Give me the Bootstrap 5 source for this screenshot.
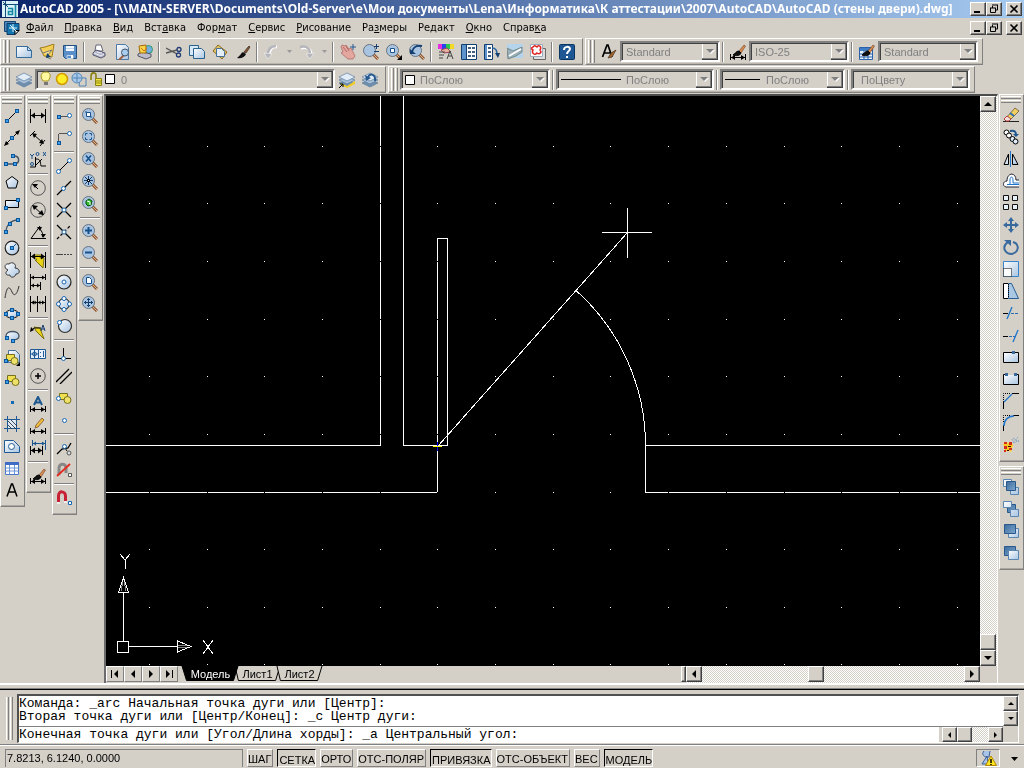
<!DOCTYPE html>
<html lang="ru">
<head>
<meta charset="utf-8">
<meta name="viewport" content="width=device-width, initial-scale=1">
<title>AutoCAD 2005</title>
<link rel="stylesheet" href="https://cdn.jsdelivr.net/npm/bootstrap@5.3.0/dist/css/bootstrap.min.css">
<style>
:root{--face:#d4d0c8;--shade:#808080;--dark:#404040;--ui:"DejaVu Sans Condensed","DejaVu Sans",sans-serif;--ms:"Liberation Sans",Arial,sans-serif}
body{background:var(--face);color:#000;font:11px/14px var(--ui);overflow:hidden}
button,select,input{font:inherit;color:inherit;border-radius:0}
button{background:none;border:0;padding:0}
svg{display:block;flex:none;fill:none;stroke:#000}
.titlebar{height:18px;padding:0 2px;background:linear-gradient(90deg,#0a246a,#a6caf0);color:#fff;font:bold 12px/16px "Noto Sans",sans-serif}
.titlebar span{padding-left:2px}
.winbtn{width:16px;height:14px;background:var(--face);border:1px solid;border-color:#fff var(--dark) var(--dark) #fff;box-shadow:inset -1px -1px var(--shade)}
.menubar{height:20px;padding:0 2px 0 4px}
.menubar a{color:#000;text-decoration:none;padding:0 5px 0 6px}
.menubar a u,.menubar a:hover u{text-decoration:underline}
.barrow{height:28px;gap:2px}
.hbar{height:27px;padding:0 4px 0 2px;border:1px solid;border-color:#fff var(--shade) var(--shade) #fff;box-shadow:inset 0 -1px #bab6ae}
.grip{width:7px;height:23px;margin-right:2px;background:linear-gradient(90deg,#fff 1px,var(--face) 1px 2px,var(--shade) 2px 3px,var(--face) 3px 4px,#fff 4px 5px,var(--face) 5px 6px,var(--shade) 6px)}
.hbar .tool{width:23px;height:22px}
.hbar .thin{width:12px}
.vsep{width:2px;height:20px;margin:0 2px;border-left:1px solid var(--shade);border-right:1px solid #fff}
.tool{display:flex;align-items:center;justify-content:center;width:22px;height:22px;flex:none}
.combo{position:relative;height:21px}
.combo svg{position:absolute;left:5px;top:2px;pointer-events:none}
.combo select{width:100%;height:21px;appearance:none;color:var(--shade);font:11px/14px var(--ms);padding:0 18px 0 4px;border:2px solid;border-color:var(--shade) #fff #fff var(--shade);box-shadow:inset 1px 1px var(--dark);background:var(--face) url("data:image/svg+xml,%3Csvg xmlns='http://www.w3.org/2000/svg' width='16' height='17'%3E%3Cpath d='M0 0h16v17H0z' fill='%23404040'/%3E%3Cpath d='M0 0h15v16H0z' fill='%23808080'/%3E%3Cpath d='M0 0h14v15H0z' fill='%23fff'/%3E%3Cpath d='M1 1h13v14H1z' fill='%23d4d0c8'/%3E%3Cpath d='M5 7h8l-4 4z' fill='%23fff'/%3E%3Cpath d='M4 6h8l-4 4z' fill='%23808080'/%3E%3C/svg%3E") no-repeat right 0 top 0}
.w-style{width:100px}.w-layer{width:300px}.w-color{width:150px}.w-line{width:158px}.w-weight{width:125px}.w-plot{width:119px}
.combo .p-sw{padding-left:18px}.combo .p-line{padding-left:68px}.combo .p-wt{padding-left:44px}.combo .p-layer{padding-left:84px}
.docks{width:104px;padding-top:1px}
.vbar{width:25px;padding:1px 1px 5px 0;border:1px solid;border-color:#fff var(--shade) var(--shade) #fff;box-shadow:inset 0 -1px #aaa69e}
.vgrip{width:20px;height:7px;margin-bottom:1px;background:linear-gradient(#fff 1px,var(--face) 1px 2px,var(--shade) 2px 3px,var(--face) 3px 4px,#fff 4px 5px,var(--face) 5px 6px,var(--shade) 6px)}
.hsep{width:20px;height:2px;margin:2px 0;border-top:1px solid var(--shade);border-bottom:1px solid #fff}
.mdi{border:solid;border-width:2px 1px 0 2px;border-color:#4c4c4c #fff #fff #6c6c6c}
.paper{background:#000}
.paper svg{shape-rendering:crispEdges;stroke:#fff}
.ucs{position:absolute;left:8px;bottom:9px}
.track{background:repeating-conic-gradient(#fff 0 25%,#d4d0c8 0 50%) 0 0/2px 2px}
.vscroll{width:17px}
.sb{width:16px;height:16px;flex:none;display:flex;align-items:center;justify-content:center;background:var(--face);border:1px solid;border-color:#fff var(--dark) var(--dark) #fff;box-shadow:inset -1px -1px var(--shade)}
.sb svg,.blackico{fill:#000;stroke:none}
.tabrow{height:17px}
.tabnav .sb{width:18px;border-color:#fff var(--shade) var(--shade) #fff;box-shadow:none}
.sheet{position:relative;height:16px;font-family:var(--ms);padding:0 2px 0 7px;min-width:42px}
.sheet svg{position:absolute;left:0;top:0;width:calc(100% + 4px);height:15px;fill:var(--face);z-index:-1;overflow:visible}
.sheet.current{color:#fff;z-index:2;min-width:52px}
.sheet.current svg{fill:#000}
.sheets{isolation:isolate}
.split{width:5px}
.hscroll{width:294px}
.hscroll .thumb{margin-left:36%;margin-right:auto}
.dockright{padding-left:1px}
.cmd{border-top:2px solid #fff;padding:3px 5px 1px 6px;position:relative}
.rule{height:2px;margin:0 -5px 4px -6px;border-top:1px solid var(--shade);border-bottom:1px solid #000}
.cmdgrip{width:7px;margin:3px 4px 3px 0;background:linear-gradient(90deg,#fff 1px,var(--face) 1px 2px,var(--shade) 2px 3px,var(--face) 3px 4px,#fff 4px 5px,var(--face) 5px 6px,var(--shade) 6px)}
.cmdbox{border:solid;border-width:2px 1px 1px 2px;border-color:#505050 #fff #fff #505050;font:13px/13px "Liberation Mono","Courier New",monospace}
.cmdbox .sb{width:15px;height:15px}
.log{height:30px;padding:1px 0 0 0;background:#fff;white-space:pre}
.cmdbox input{border:0;padding:0;height:15px;background:#fff;outline:0}
.cmdline{border-top:1px solid var(--shade);margin-right:15px;background:var(--face)}
.cmdscroll{width:64px;padding-left:3px}
.status{height:24px;padding:4px 5px 0;border-top:1px solid var(--shade);box-shadow:inset 0 1px #fff;font:11px/16px var(--ms)}
.coords{width:238px;height:18px;padding-left:1px;border:solid;border-width:1px 1px 0;border-color:var(--shade) var(--shade) #fff}
.mode{height:18px;padding:1px 1px 0 0;border:1px solid;border-color:#fff var(--shade) var(--shade) #fff;white-space:nowrap;text-align:center}
.mode.on{border-color:#000 #fff #fff #000;padding:2px 0 0 1px}
.tray{width:24px;height:18px;border:1px solid;border-color:var(--shade) #fff #fff var(--shade);margin-right:7px}
</style>
</head>
<body class="d-flex flex-column vh-100">
<svg width="0" height="0" class="position-absolute" aria-hidden="true"><defs>
<g id="n" stroke="none"><path d="M0 0h4v4H0z" fill="#0c5799"/><path d="M1 1h2v2H1z" fill="#3f9fec"/></g>
<circle id="o" cx="2.5" cy="2.5" r="2" fill="#fff" stroke="#1768b4"/>
<g id="mag"><path d="m10.500 10.500 4.500 4.500" stroke="#8b5a3c" stroke-width="3"/><path d="m11 11 4 4" stroke="#e6b07a"/><circle cx="6.500" cy="6.500" r="6" fill="#a9c4e0" stroke="#68737f"/></g>
<g id="dim"><path d="M.5 1v14M15.500 1v14M1 7.500h14"/><path d="m1 7.500 4-3v6zM15 7.500l-4-3v6z" fill="#000" stroke="none"/></g>
<g id="dimlow"><path d="M.5 10v6M15.500 10v6M1 13.500h14"/><path d="m1 13.500 4-2.500v5zM15 13.500l-4-2.500v5z" fill="#000" stroke="none"/></g>
<g id="brush"><path d="m9 7 5-6 1.500 1L11 9z" fill="#d98c50" stroke="#704020" stroke-width=".6"/><path d="M9 7c-3 0-4 3-6 4 3 1 7 1 8-2z" fill="#111"/></g>
<g id="layers" stroke="#5c7c9c" stroke-width=".7"><path d="m0 11 8-3 8 3-8 4z" fill="#6f8fae"/><path d="m0 8 8-3 8 3-8 4z" fill="#a9c2da"/><path d="m0 5 8-4 8 4-8 4z" fill="#e2edf8"/></g>
<g id="duo"><path d="M.5.5h8v6h-8z" fill="#f0df50" stroke="#77701a"/><circle cx="8.500" cy="7" r="3.500" fill="#eee16a" stroke="#77701a"/></g>
<linearGradient id="sheen" x2="1" y2="1"><stop stop-color="#fff"/><stop offset="1" stop-color="#a9c5e2"/></linearGradient>
<linearGradient id="deep" x2="1" y2="1"><stop stop-color="#3e6b9c"/><stop offset="1" stop-color="#7ca6ce"/></linearGradient>
<g id="min"><path d="M3 9h6" stroke-width="2"/></g>
<g id="rest"><path d="M5 2h6M5.500 3v2M10.500 2v5H9M3 5h6M3.500 5v4.500h5V5"/></g>
<g id="cls"><path d="m3.500 2.500 7 7m0-7-7 7" stroke-width="1.600"/></g>
</defs></svg>

<header class="titlebar d-flex align-items-center">
<svg width="16" height="16" viewBox="0 0 16 16"><path d="M0 0h16v16H0z" fill="#d8f2f6" stroke="none"/><path d="M1 3.500h15M3.500 0v16M1 1l5 5" stroke="#164b78"/><path d="M6 7.500h4.500v6h-4v-3h4M13.500 4v12" stroke="#1687a6" stroke-width="1.600"/></svg>
<span class="flex-grow-1 text-nowrap overflow-hidden">AutoCAD 2005 - [\\MAIN-SERVER\Documents\Old-Server\e\Мои документы\Lena\Информатика\К аттестации\2007\AutoCAD\AutoCAD (стены двери).dwg]</span>
<button class="winbtn" aria-label="Свернуть"><svg width="14" height="12"><use href="#min"/></svg></button>
<button class="winbtn" aria-label="Восстановить"><svg width="14" height="12"><use href="#rest"/></svg></button>
<button class="winbtn ms-1" aria-label="Закрыть"><svg width="14" height="12"><use href="#cls"/></svg></button>
</header>

<nav class="menubar d-flex align-items-center">
<svg width="16" height="16" viewBox="0 0 16 16"><path d="M.5 1.500h11v10H.5z" fill="#4c88bd" stroke="#174572"/><path d="M3 3.500h12v7l-4 4H3z" fill="#1474ad" stroke="#123d68"/><path d="M15 10.500h-4v4z" fill="#fff"/><path d="M5 8h8M9 4v8M6 5l6 6" stroke="#e1fbff"/></svg>
<a href="#"><u>Ф</u>айл</a><a href="#"><u>П</u>равка</a><a href="#"><u>В</u>ид</a><a href="#">Вст<u>а</u>вка</a><a href="#">Фор<u>м</u>ат</a><a href="#"><u>С</u>ервис</a><a href="#"><u>Р</u>исование</a><a href="#">Ра<u>з</u>меры</a><a href="#">Ре<u>д</u>акт</a><a href="#"><u>О</u>кно</a><a href="#">Справ<u>к</u>а</a>
<button class="winbtn ms-auto" aria-label="Свернуть чертеж"><svg width="14" height="12"><use href="#min"/></svg></button>
<button class="winbtn" aria-label="Восстановить чертеж"><svg width="14" height="12"><use href="#rest"/></svg></button>
<button class="winbtn ms-1" aria-label="Закрыть чертеж"><svg width="14" height="12"><use href="#cls"/></svg></button>
</nav>

<div class="barrow d-flex">
<div class="hbar d-flex align-items-center" role="toolbar" aria-label="Стандартная">
<span class="grip"></span>
<button class="tool" aria-label="Создать"><svg width="16" height="16"><path d="M.5 2.500h11l4 4v7H.5z" fill="url(#sheen)" stroke="#336b9c"/><path d="M11.500 2.500v4h4" stroke="#336b9c"/></svg></button>
<button class="tool" aria-label="Открыть"><svg width="16" height="16"><path d="m1 4 5-1 9-3-2 13-8-1z" fill="#f4cf55" stroke="#a47c18"/><path d="m1 4 3 5 9-3-6 7 5 2" fill="#fae896" stroke="#777"/><path d="m7 14 1-5 4 4z" fill="#16406e" stroke="none"/></svg></button>
<button class="tool" aria-label="Сохранить"><svg width="16" height="16"><path d="M1.500 1.500h13v13h-11l-2-2z" fill="#5b8fca" stroke="#23507f"/><path d="M4 2h8v5H4z" fill="#f4f8ff" stroke="none"/><path d="M4 4.500h8M5 11.500h6v3H5z" stroke="#bed4ea"/><path d="M9 11h2v3H9z" fill="#fff" stroke="none"/></svg></button>
<span class="vsep"></span>
<button class="tool" aria-label="Печать"><svg width="16" height="16"><path d="m4 7 1-6h5l2 6z" fill="#fff" stroke="#667"/><path d="m2 9 3-3 9 3v3l-4 2-8-3z" fill="#b3b5cc" stroke="#55566b"/><path d="m3 9 7 3 3-2M6 8l5 1" stroke="#eee"/></svg></button>
<button class="tool" aria-label="Предварительный просмотр"><svg width="16" height="16"><path d="M2.500.5h9l3 3v12h-12z" fill="url(#sheen)" stroke="#4d79a4"/><path d="m10 11-5 5" stroke="#a06040" stroke-width="2"/><circle cx="11" cy="8.500" r="3.500" fill="#a9cdee" stroke="#456"/></svg></button>
<button class="tool" aria-label="Публикация"><svg width="16" height="16"><circle cx="11.500" cy="5.500" r="4" fill="#6fb0e0" stroke="#396"/><path d="m1 10 4-2 9 2v3l-5 2-8-3z" fill="#bbc" stroke="#556"/><path d="m2 2 7-1v8H3z" fill="#f5d448" stroke="#a56c0a"/><path d="m4 4 3 3 3-3" stroke="#d07010"/></svg></button>
<span class="vsep"></span>
<button class="tool" aria-label="Вырезать"><svg width="16" height="16"><path d="m0 4 11 6M0 9l11-3" stroke="#555" stroke-width="1.300"/><circle cx="13" cy="5.500" r="2" stroke="#203a74" stroke-width="1.300"/><circle cx="12.500" cy="11" r="2" stroke="#203a74" stroke-width="1.300"/></svg></button>
<button class="tool" aria-label="Копировать"><svg width="16" height="16"><path d="M.5 1.500h9v10h-9z" fill="#d8e8f6" stroke="#29618f"/><path d="M4.500 4.500h8l3 3v7h-11z" fill="url(#sheen)" stroke="#29618f"/></svg></button>
<button class="tool" aria-label="Вставить"><svg width="16" height="16"><path d="m1 7 5-6 9 7-5 7z" fill="#e2c364" stroke="#8b6a1c"/><path d="M4.500 4.500h5l3 3v5h-8z" fill="#e4eef8" stroke="#456f98"/></svg></button>
<button class="tool" aria-label="Копирование свойств"><svg width="16" height="16"><path d="m9 8 5-6 1 1-4 6z" fill="#8a5434" stroke="#543"/><path d="M8 8c-2 1-3 4-6 6 4 1 8-1 9-4z" fill="#111" stroke="none"/></svg></button>
<span class="vsep"></span>
<button class="tool" aria-label="Отменить" disabled><svg width="16" height="16"><path d="M13 3C8 2 5 6 5 11" stroke="#fff" stroke-width="3"/><path d="M12 2C6 2 4 6 4 11" stroke="#b5b5bb" stroke-width="2.500"/><path d="m0 9 8 1-4 5z" fill="#b5b5bb" stroke="#fff" stroke-width=".5"/></svg></button>
<button class="tool thin" aria-label="Список отмены" disabled><svg width="5" height="4"><path d="M0 0h5L2.500 3z" fill="#999" stroke="none"/></svg></button>
<button class="tool" aria-label="Повторить" disabled><svg width="16" height="16"><path d="M2 4c7-2 10 2 10 7" stroke="#fff" stroke-width="3"/><path d="M1 3c7-2 10 2 10 7" stroke="#b5b5bb" stroke-width="2.500"/><path d="m7 10 8-1-4 6z" fill="#b5b5bb" stroke="#fff" stroke-width=".5"/></svg></button>
<button class="tool thin" aria-label="Список повтора" disabled><svg width="5" height="4"><path d="M0 0h5L2.500 3z" fill="#999" stroke="none"/></svg></button>
<span class="vsep"></span>
<button class="tool" aria-label="Панорамирование"><svg width="16" height="16"><path d="m1 3 2 5-2 1 7 6h5l2-3-4-8-2 1-3-4-1 1-3-1z" fill="#e3a7a0" stroke="#b06a68" stroke-width=".8"/><path d="m3 3 4 5M6 2l3 5" stroke="#b06a68"/><path d="M13 0v6M10 3h6" stroke="#245a92"/></svg></button>
<button class="tool" aria-label="Зумирование"><svg width="16" height="16"><use href="#mag"/><path d="M13.500 0v5M11 2.500h5M11 7.500h5" stroke="#123e70"/></svg></button>
<button class="tool" aria-label="Зумирование рамкой"><svg width="16" height="16"><use href="#mag"/><path d="M4.500 4.500h4v4h-4z" fill="#fff" stroke="#17518c"/><path d="M16 11v5h-5z" fill="#000" stroke="none"/></svg></button>
<button class="tool" aria-label="Зумирование предыдущее"><svg width="16" height="16"><use href="#mag"/><path d="M3 8c1-5 5-7 10-6" stroke="#123e70" stroke-width="2"/><path d="M1 5v5h6z" fill="#123e70" stroke="none"/></svg></button>
<span class="vsep"></span>
<button class="tool" aria-label="Свойства"><svg width="16" height="16"><path d="M0 0h4v5H0z" fill="#e22ee0" stroke="none"/><path d="M4 0h4v5H4z" fill="#2943e8" stroke="none"/><path d="M8 0h4v5H8z" fill="#2cc84c" stroke="none"/><path d="M12 0h4v5h-4z" fill="#f2d928" stroke="none"/><path d="m3 6 6-2 4 4-7 1z" fill="#e8b0a0" stroke="#945"/><path d="M1 8h6M1 11h5M1 14h4" stroke="#444"/><path d="m9 15 3-8 3 8m-5-3h4" stroke="#444"/></svg></button>
<button class="tool" aria-label="Центр управления"><svg width="16" height="16"><path d="M.5.5h15v15H.5z" fill="#fff" stroke="#123e70"/><path d="M1 1h4v14H1z" fill="#5e93cc" stroke="none"/><path d="M5.500 1v14" stroke="#123e70"/><path d="M7 4h3m1 0h3M7 8h3m1 0h3M7 12h3m1 0h3" stroke="#47617f" stroke-width="2"/></svg></button>
<button class="tool" aria-label="Инструментальные палитры"><svg width="16" height="16"><path d="M.5.5h8v15h-8z" fill="#fff" stroke="#123e70"/><path d="M1 1h2v14H1z" fill="#5e93cc" stroke="none"/><path d="M4 4h3M4 8h3M4 12h3" stroke-width="2" stroke="#47617f"/><path d="M8 4c4 0 5 2 5 6" stroke="#2865a4" stroke-width="1.500"/><path d="M11 9h5l-2 5z" fill="#123e70" stroke="none"/></svg></button>
<button class="tool" aria-label="Диспетчер подшивок"><svg width="16" height="16"><path d="M0 0h16v14H0z" fill="#b4d4ee" stroke="none"/><path d="m0 4 6 3 9-4v5l-6 4-8 3z" fill="#9aaeb8" stroke="#788"/><path d="m2 12 12-7" stroke="#fff" stroke-width="2"/></svg></button>
<button class="tool" aria-label="Диспетчер пометок"><svg width="16" height="16"><path d="M3.500 4.500h12v11h-12z" fill="#ddd" stroke="#666"/><path d="M.5.5h12v12H.5z" fill="#fff" stroke="#9aabbb"/><path d="M3 3c2-3 3 0 4 0 2-3 5 0 3 3 2 2 0 5-3 3-2 3-6 0-4-3-2-1-2-2 0-3z" stroke="#e02525" stroke-width="1.500"/></svg></button>
<span class="vsep"></span>
<button class="tool" aria-label="Справка"><svg width="16" height="16"><rect x=".5" y=".5" width="15" height="15" rx="1" fill="#1e5793" stroke="#0b3563"/><path d="M5 6c0-4 6-4 6-1 0 2-3 2-3 5" stroke="#fff" stroke-width="2"/><path d="M7 12h2v2H7z" fill="#fff" stroke="none"/></svg></button>
</div>
<div class="hbar d-flex align-items-center" role="toolbar" aria-label="Стили">
<span class="grip"></span>
<button class="tool" aria-label="Текстовые стили"><svg width="16" height="16"><path d="M1.500 13 6 1h1l4 12M3 9h6" stroke-width="1.700"/><path d="m7 14 3-5 5-3-4 7z" fill="#a4642e" stroke="#432" stroke-width=".7"/></svg></button>
<div class="combo w-style"><select aria-label="Текстовый стиль"><option>Standard</option></select></div><span class="vsep"></span>
<button class="tool" aria-label="Размерные стили"><svg width="16" height="16"><use href="#dimlow"/><use href="#brush"/></svg></button>
<div class="combo w-style"><select aria-label="Размерный стиль"><option>ISO-25</option></select></div><span class="vsep"></span>
<button class="tool" aria-label="Табличные стили"><svg width="16" height="16"><path d="M.5 3.500h13v12H.5z" fill="#eaf2fb" stroke="#2b63aa"/><path d="M1 4h12v3H1z" fill="#3f7dc4" stroke="none"/><path d="M1 10h12M1 13h12M5 7v8M9 7v8" stroke="#2b63aa"/><use href="#brush"/></svg></button>
<div class="combo w-style"><select aria-label="Табличный стиль"><option>Standard</option></select></div>
</div>
</div>

<div class="barrow d-flex">
<div class="hbar d-flex align-items-center" role="toolbar" aria-label="Слои">
<span class="grip"></span>
<button class="tool" aria-label="Диспетчер слоев"><svg width="16" height="16"><use href="#layers"/></svg></button>
<div class="combo w-layer"><select class="p-layer" aria-label="Слой"><option>0</option></select>
<svg width="78" height="17"><path d="M3 10C-1 4 2 1 6 1s6 4 2 9z" fill="#fff9a0" stroke="#a9951d"/><path d="M4 11h4v3H4z" fill="#777" stroke="none"/><circle cx="22" cy="8" r="5.500" fill="#ffed28" stroke="#d19900" stroke-width="1.500"/><path d="M40 7h6v8h-7z" fill="#d4d0c8" stroke="#5285b4"/><circle cx="37" cy="7" r="5" fill="#a7c8e8" stroke="#5285b4"/><path d="M37 3v8M33 7h8" stroke="#5285b4"/><path d="M51 9V5c0-4 5-4 5-1v4" stroke="#8b8214" stroke-width="1.600"/><path d="M55.500 7.500h6v7h-6z" fill="#f1e840" stroke="#8b8214"/><path d="M56 10h6M56 12h6" stroke="#8b8214"/><path d="M65.500 3.500h9v9h-9z" fill="#fff"/></svg></div>
<button class="tool" aria-label="Слой объекта"><svg width="16" height="16"><use href="#layers"/><path d="m2 11 6 3 8-5v3l-8 4-6-3z" fill="#f2cc28" stroke="none"/><path d="m0 16 4-4m-3 0h3v3"/></svg></button>
<button class="tool" aria-label="Предыдущий слой"><svg width="16" height="16"><use href="#layers"/><path d="M13 9c1-7-5-8-7-4" stroke="#29588c" stroke-width="2"/><path d="m3 3 1 6 5-3z" fill="#29588c" stroke="none"/></svg></button>
</div>
<div class="hbar d-flex align-items-center" role="toolbar" aria-label="Свойства объектов">
<span class="grip"></span>
<div class="combo w-color"><select class="p-sw" aria-label="Цвет"><option>ПоСлою</option></select><svg width="12" height="16"><path d="M.5 4.500h9v9h-9z" fill="#fff"/></svg></div><span class="vsep"></span>
<div class="combo w-line"><select class="p-line" aria-label="Тип линии"><option>ПоСлою</option></select><svg width="60" height="16"><path d="M0 8.500h60"/></svg></div><span class="vsep"></span>
<div class="combo w-weight"><select class="p-wt" aria-label="Вес линии"><option>ПоСлою</option></select><svg width="35" height="16"><path d="M0 8.500h35"/></svg></div><span class="vsep"></span>
<div class="combo w-plot"><select class="p-plot ps-2" aria-label="Стиль печати"><option>ПоЦвету</option></select></div>
</div>
</div>

<main class="d-flex flex-grow-1" style="min-height:0">
<aside class="docks d-flex align-items-start flex-shrink-0">
<div class="vbar me-auto d-flex flex-column align-items-center" role="toolbar" aria-label="Рисование">
<span class="vgrip"></span>
<button class="tool" aria-label="Отрезок"><svg width="16" height="16"><path d="M3 13 13 3"/><use href="#n" x="1" y="11"/><use href="#n" x="11" y="1"/></svg></button>
<button class="tool" aria-label="Прямая"><svg width="16" height="16"><path d="M2 14 14 2"/><path d="m0 16 2-5 3 3zM16 0l-2 5-3-3z" fill="#000" stroke="none"/><use href="#n" x="6" y="6"/></svg></button>
<button class="tool" aria-label="Полилиния"><svg width="16" height="16"><path d="M2 12h9c5-1 5-8-1-8H8" stroke="#456" stroke-width="1.500"/><use href="#n" x="0" y="10"/><use href="#n" x="9" y="10"/><use href="#n" x="7" y="2"/></svg></button>
<button class="tool" aria-label="Многоугольник"><svg width="16" height="16"><path d="m8 2.500 6 4.500-2 7H4L2 7z" fill="url(#sheen)"/></svg></button>
<button class="tool" aria-label="Прямоугольник"><svg width="16" height="16"><path d="M1.500 4.500h13v7h-13z" fill="url(#sheen)"/><use href="#n" x="0" y="10"/><use href="#n" x="12" y="2"/></svg></button>
<button class="tool" aria-label="Дуга"><svg width="16" height="16"><path d="M2 14C2 7 7 2 14 2" stroke="#456" stroke-width="1.300"/><use href="#n" x="0" y="12"/><use href="#n" x="4" y="4"/><use href="#n" x="12" y="0"/></svg></button>
<button class="tool" aria-label="Круг"><svg width="16" height="16"><circle cx="8" cy="8" r="6.800" fill="url(#sheen)" stroke="#222" stroke-width="1.200"/><path d="m8 8 4-4" stroke="#17518c"/><use href="#n" x="6" y="6"/></svg></button>
<button class="tool" aria-label="Облако"><svg width="16" height="16"><path d="M4 8C-1 6 1 1 5 2c3-3 8 0 6 4 5 0 6 6 1 6-1 4-6 4-6 1-5 1-5-3-2-5z" fill="url(#sheen)" stroke="#333"/></svg></button>
<button class="tool" aria-label="Сплайн"><svg width="16" height="16"><path d="M1 14C3 0 6 3 8 8s5 3 7-6" stroke="#333"/></svg></button>
<button class="tool" aria-label="Эллипс"><svg width="16" height="16"><ellipse cx="8" cy="8" rx="6.500" ry="4" fill="url(#sheen)"/><use href="#n" x="0" y="6"/><use href="#n" x="12" y="6"/><use href="#n" x="6" y="2"/><use href="#n" x="6" y="10"/></svg></button>
<button class="tool" aria-label="Эллиптическая дуга"><svg width="16" height="16"><path d="M2 8c0-6 13-6 13 0 0 3-3 4-7 4" fill="url(#sheen)" stroke="#456" stroke-width="1.300"/><use href="#n" x="1" y="8"/><use href="#n" x="7" y="11"/></svg></button>
<button class="tool" aria-label="Вставить блок"><svg width="16" height="16"><path d="M4.500.5h7l4 4v8h-11z" fill="url(#sheen)" stroke="#456f98"/><use href="#duo" x="2" y="4"/><use href="#n" x="0" y="9"/><path d="M16 12v4h-4z" fill="#000" stroke="none"/></svg></button>
<button class="tool" aria-label="Создать блок"><svg width="16" height="16"><use href="#duo" x="3" y="3"/><use href="#n" x="1" y="8"/></svg></button>
<button class="tool" aria-label="Точка"><svg width="16" height="16"><path d="M7 7h3v3H7z" fill="#1468b4" stroke="none"/></svg></button>
<button class="tool" aria-label="Штриховка"><svg width="16" height="16"><path d="M3 3h10v10H3z" fill="#dce9f6" stroke="none"/><path d="M3.500 0v16M12.500 0v16M0 3.500h16M0 12.500h16" stroke="#205a94"/><path d="m4 9 4 4M4 5l8 8M7 4l6 6" stroke="#222" stroke-width=".8"/></svg></button>
<button class="tool" aria-label="Область"><svg width="16" height="16"><path d="M.5 2.500h9l6 6v6H.5z" fill="url(#sheen)" stroke="#205a94"/><circle cx="7.500" cy="8.500" r="3" fill="#fff" stroke="#205a94"/></svg></button>
<button class="tool" aria-label="Таблица"><svg width="16" height="16"><path d="M1.500 2.500h13v12h-13z" fill="#fff" stroke="#4b7ac8"/><path d="M1 2h14v3H1z" fill="#3f6cc4" stroke="none"/><path d="M2 8h12M2 11h12M5.500 5v9M10.500 5v9" stroke="#6c94d8"/></svg></button>
<button class="tool" aria-label="Многострочный текст"><svg width="16" height="16"><path d="M3 14.500 7.500 2h1L13 14.500M5 10h6" stroke-width="1.500"/></svg></button>
</div>
<div class="vbar me-auto d-flex flex-column align-items-center" role="toolbar" aria-label="Размеры">
<span class="vgrip"></span>
<button class="tool" aria-label="Линейный размер"><svg width="16" height="16"><use href="#dim"/></svg></button>
<button class="tool" aria-label="Параллельный размер"><svg width="16" height="16"><path d="M5 1 0 6m15 4-5 6M3 4l10 9"/><path d="m2 3 5 1-3 4zM14 14l-5-1 3-4z" fill="#000" stroke="none"/></svg></button>
<button class="tool" aria-label="Ординатный размер"><svg width="16" height="16"><path d="M5.500 5v10H0M6 7c5 0 4 3 5 7h5M5 14l7-7"/><path d="m0 2 2 2 2-2M2 4v3M13 0l3 4m0-4-3 4" stroke="#17518c"/><circle cx="7.500" cy="2" r="1.500" stroke="#17518c"/><circle cx="2" cy="12" r="1.500" stroke="#17518c"/></svg></button>
<span class="hsep"></span>
<button class="tool" aria-label="Радиус"><svg width="16" height="16"><circle cx="8" cy="8" r="7.300" stroke="#555"/><path d="m4 5 4 4"/><path d="m2 4 6 0-3 4z" fill="#000" stroke="none"/></svg></button>
<button class="tool" aria-label="Диаметр"><svg width="16" height="16"><circle cx="8" cy="8" r="7.300" stroke="#555"/><path d="m3 4 10 9"/><path d="m2 3 6 1-4 4zM14 13l-6-1 4-4z" fill="#000" stroke="none"/></svg></button>
<button class="tool" aria-label="Угловой размер"><svg width="16" height="16"><path d="M16 14.500H1L10 2M8 4c4 2 5 6 5 9"/><path d="m7 3 5 0-2 4zM11 10h5l-3 4z" fill="#000" stroke="none"/></svg></button>
<span class="hsep"></span>
<button class="tool" aria-label="Быстрый размер"><svg width="16" height="16"><path d="M3 3h9l-2 3h4l-1 10-8-8h2z" fill="#e8d21a" stroke="#7d700c"/><path d="M.5 0v16M15.500 0v16M1 4.500h14"/><path d="m1 4.500 4-3v6zM15 4.500l-4-3v6z" fill="#000" stroke="none"/></svg></button>
<button class="tool" aria-label="Базовый размер"><svg width="16" height="16"><path d="M.5 0v16M15.500 0v6M10.500 8v8M1 3.500h14M1 11.500h9"/><path d="m1 3.500 3-2v4zM15 3.500l-3-2v4zM1 11.500l3-2v4zM10 11.500l-3-2v4z" fill="#000" stroke="none"/></svg></button>
<button class="tool" aria-label="Размерная цепь"><svg width="16" height="16"><path d="M.5 0v16M7.500 0v16M15.500 0v16M1 6.500h14"/><path d="m1 6.500 3-2v4zM15 6.500l-3-2v4zM8 6.500l2.500-2v4zM7 6.500l-2.500-2v4z" fill="#000" stroke="none"/></svg></button>
<span class="hsep"></span>
<button class="tool" aria-label="Быстрая выноска"><svg width="16" height="16"><path d="m4 3 6 1 4 11-8-8z" fill="#e8d21a" stroke="#7d700c"/><path d="m1 7 3-3h7" stroke="#111"/><path d="m11 7 2-6 2 6m-3-2h3" stroke="#173e70"/><path d="m0 8 1-5 3 3z" fill="#000" stroke="none"/></svg></button>
<button class="tool" aria-label="Допуск"><svg width="16" height="16"><path d="M.5 3.500h15v9H.5zM8.500 3v10" fill="#e8f1fb" stroke="#205a94"/><circle cx="4.500" cy="8" r="2" stroke="#205a94"/><path d="M4.500 4v8M1 8h7M10.500 6v1M10.500 10v1M13.500 5v6" stroke="#205a94"/></svg></button>
<button class="tool" aria-label="Маркер центра"><svg width="16" height="16"><circle cx="8" cy="8" r="7.300" stroke="#555"/><path d="M8 5v6M5 8h6" stroke-width="1.500"/></svg></button>
<span class="hsep"></span>
<button class="tool" aria-label="Редактировать размер"><svg width="16" height="16"><path d="m4 9 4-8 4 8M5 6.500h6" stroke="#1b568e" stroke-width="2"/><use href="#dimlow"/></svg></button>
<button class="tool" aria-label="Редактировать текст размера"><svg width="16" height="16"><use href="#dimlow"/><path d="m5 10 1-3 6-7 2 2-6 7z" fill="#f0bd3c" stroke="#704020" stroke-width=".7"/></svg></button>
<button class="tool" aria-label="Обновить размер"><svg width="16" height="16"><path d="M2.500 0v6M15.500 0v10M3 3.500h12" stroke="#1b568e"/><path d="m3 3.500 3-2v4zM15 3.500l-3-2v4z" fill="#1b568e" stroke="none"/><path d="M.5 6v9M12.500 6v9M1 10.500h11"/><path d="m1 10.500 4-3v6zM12 10.500l-4-3v6z" fill="#000" stroke="none"/></svg></button>
<span class="hsep"></span>
<button class="tool" aria-label="Стили размеров"><svg width="16" height="16"><use href="#dimlow"/><use href="#brush"/></svg></button>
</div>
<div class="vbar me-auto d-flex flex-column align-items-center" role="toolbar" aria-label="Объектная привязка">
<span class="vgrip"></span>
<button class="tool" aria-label="Точка отслеживания"><svg width="16" height="16"><path d="M3 8.500h9" stroke="#555"/><use href="#n" x="1" y="7"/><use href="#o" x="11" y="5"/></svg></button>
<button class="tool" aria-label="Смещение"><svg width="16" height="16"><path d="M3 3.500h9M2.500 4v8" stroke="#555" stroke-dasharray="9 1 2 1 2"/><use href="#n" x="1" y="11"/><use href="#o" x="11" y="1"/></svg></button>
<span class="hsep"></span>
<button class="tool" aria-label="Конечная точка"><svg width="16" height="16"><path d="M3 13 13 3"/><use href="#o" x="0" y="11"/><use href="#o" x="11" y="0"/></svg></button>
<button class="tool" aria-label="Середина"><svg width="16" height="16"><path d="M1 15 15 1" stroke-width="1.300"/><use href="#o" x="5" y="6"/></svg></button>
<button class="tool" aria-label="Пересечение"><svg width="16" height="16"><path d="M1 15 15 1M1 1l14 14" stroke-width="1.300"/><use href="#o" x="5.500" y="5.500"/></svg></button>
<button class="tool" aria-label="Кажущееся пересечение"><svg width="16" height="16"><path d="m1 1 14 14" stroke-width="1.300"/><path d="M1 15 15 1" stroke-width="1.300" stroke-dasharray="3 2"/><use href="#o" x="5.500" y="5.500"/></svg></button>
<button class="tool" aria-label="Продолжение"><svg width="16" height="16"><path d="M0 8.500h7m1 0h2m1 0h2m1 0h2" stroke="#444"/></svg></button>
<span class="hsep"></span>
<button class="tool" aria-label="Центр"><svg width="16" height="16"><circle cx="8" cy="8" r="7" fill="url(#sheen)" stroke="#222" stroke-width="1.200"/><use href="#o" x="5.500" y="5.500"/></svg></button>
<button class="tool" aria-label="Квадрант"><svg width="16" height="16"><circle cx="8" cy="8" r="5.500" fill="url(#sheen)"/><use href="#o" x="5.500" y="0"/><use href="#o" x="5.500" y="11"/><use href="#o" x="0" y="5.500"/><use href="#o" x="11" y="5.500"/></svg></button>
<button class="tool" aria-label="Касательная"><svg width="16" height="16"><circle cx="9" cy="8" r="6.500" fill="url(#sheen)" stroke="#333" stroke-width="1.200"/><use href="#o" x="1" y="2"/></svg></button>
<span class="hsep"></span>
<button class="tool" aria-label="Нормаль"><svg width="16" height="16"><path d="M7.500 2v10M1 12.500h14"/><use href="#o" x="5" y="10"/></svg></button>
<button class="tool" aria-label="Параллельно"><svg width="16" height="16"><path d="M0 14 13 1M4 16 16 4" stroke-width="1.300"/></svg></button>
<button class="tool" aria-label="Точка вставки"><svg width="16" height="16"><use href="#duo" x="3" y="3"/><use href="#o" x="0" y="6"/></svg></button>
<button class="tool" aria-label="Узел"><svg width="16" height="16"><use href="#o" x="6" y="6"/></svg></button>
<span class="hsep"></span>
<button class="tool" aria-label="Ближайшая"><svg width="16" height="16"><path d="m1 14 5-5 6-1 3-5" stroke-width="1.300"/><path d="m9 8 2 3"/><use href="#o" x="6" y="4"/><circle cx="13" cy="13" r="2" stroke="#555" fill="#ddd"/></svg></button>
<button class="tool" aria-label="Отменить привязку"><svg width="16" height="16"><path d="M3 13V6c0-5 7-5 7 0v5" stroke="#888" stroke-width="3"/><path d="M1 14 14 2" stroke="#e52b20" stroke-width="1.800"/><path d="M12.500 11.500h3v3h-3z" fill="#fff" stroke="#555"/></svg></button>
<span class="hsep"></span>
<button class="tool" aria-label="Режимы привязки"><svg width="16" height="16"><path d="M2.500 14V6c0-6 7-5 7 0v7" stroke="#c72136" stroke-width="3"/><path d="M1 13h3M8 12h3" stroke="#eee" stroke-width="2"/><path d="M12.500 11.500h3v3h-3z" fill="#fff" stroke="#1768b4"/></svg></button>
</div>
<div class="vbar me-auto d-flex flex-column align-items-center" role="toolbar" aria-label="Зумирование">
<span class="vgrip"></span>
<button class="tool" aria-label="Рамка"><svg width="16" height="16"><use href="#mag"/><path d="M4.500 4.500h4v4h-4zM3 4h2M8 9h2" fill="#fff" stroke="#17518c"/></svg></button>
<button class="tool" aria-label="Динамика"><svg width="16" height="16"><use href="#mag"/><path d="M3.500 5.500v-2h2M7.500 3.500h2v2M3.500 7.500v2h2M9.500 7.500v2h-2" stroke="#17518c"/></svg></button>
<button class="tool" aria-label="Масштаб"><svg width="16" height="16"><use href="#mag"/><path d="m4 3.500 5 6m0-6-5 6" stroke="#17518c" stroke-width="1.600"/></svg></button>
<button class="tool" aria-label="По центру"><svg width="16" height="16"><use href="#mag"/><path d="m3 3 7 7m0-7-7 7M6.500 2v9M2 6.500h9" stroke="#123e70"/><path d="M5.500 5.500h2v2h-2z" fill="#fff"/></svg></button>
<button class="tool" aria-label="Объект"><svg width="16" height="16"><use href="#mag"/><path d="m4 5 3-2 3 2-1 4-3 1-2-2z" fill="#31bd30" stroke="#064c0c"/><path d="m5 5 3 1v3" stroke="#fff"/></svg></button>
<span class="hsep"></span>
<button class="tool" aria-label="Увеличить"><svg width="16" height="16"><use href="#mag"/><path d="M6.500 3v7M3 6.500h7" stroke="#17518c" stroke-width="2"/></svg></button>
<button class="tool" aria-label="Уменьшить"><svg width="16" height="16"><use href="#mag"/><path d="M3 6.500h7" stroke="#17518c" stroke-width="2"/></svg></button>
<span class="hsep"></span>
<button class="tool" aria-label="Все"><svg width="16" height="16"><use href="#mag"/><path d="M4.500 3.500h3l2 2v4h-5z" fill="#fff" stroke="#17518c"/></svg></button>
<button class="tool" aria-label="Границы"><svg width="16" height="16"><use href="#mag"/><path d="M6.500 2v9M2 6.500h9M5 3.500h3M5 9.500h3M3.500 5v3M9.500 5v3" stroke="#123e70"/></svg></button>
</div>
</aside>

<section class="mdi flex-grow-1 d-flex flex-column" style="min-width:0">
<div class="d-flex flex-grow-1" style="min-height:0">
<div class="paper flex-grow-1 position-relative overflow-hidden" style="min-width:0">
<svg class="position-absolute" width="100%" height="100%" role="img" aria-label="Чертеж стены и двери">
<path d="M0 349.500h274.500V-10M297.500-10v359.500h44V142.500h-10v254H0M539.500 396.500H4000M539.500 396.500v-47M539.500 349.500H4000M332 350 521.500 136.500M539.500 350A208 208 0 0 0 470 194.500M496 136.500h50M521.500 112v50"/>
<path d="M331.500 346v9" stroke="#00f"/><path d="M327 350.500h9" stroke="#ff0"/>
<path style="mix-blend-mode:difference" stroke-dasharray="1 57 1 56 1 57 1 57 1 56 1 57 1 57 1 56 1 57 1 57" d="M43 50.500h4000M43 107.500h4000M43 165.500h4000M43 223.500h4000M43 280.500h4000M43 338.500h4000M43 396.500h4000M43 453.500h4000M43 511.500h4000M43 568.500h4000M43 626.500h4000M43 684.500h4000M43 742.500h4000M43 799.500h4000M43 857.500h4000M43 915.500h4000"/>
</svg>
<svg class="ucs" width="104" height="116" aria-hidden="true"><path d="M7 50l2-10M12 50l-2-10M64 104l11 1M64 107l11-1" stroke="#888"/><path d="M3.500 100.500h11v11h-11zM9.500 100V52M15 105.500h48M4.500 51.500h10L9.500 37zM63.500 100v11L77 105.500zM6 13l5 6 5-6M11.500 19v9M99 99l-10 14M89 99l10 14"/></svg>
</div>
<div class="vscroll track d-flex flex-column align-items-start">
<button class="sb" aria-label="Вверх"><svg width="8" height="4"><path d="M4 0 8 4H0z"/></svg></button>
<span class="sb mt-auto"></span>
<button class="sb" aria-label="Вниз"><svg width="8" height="4"><path d="M0 0h8L4 4z"/></svg></button>
</div>
</div>
<div class="tabrow d-flex">
<div class="tabnav d-flex">
<button class="sb" aria-label="Первый лист"><svg width="8" height="8"><path d="M0 0h1v8H0zM7 0v8L3 4z"/></svg></button>
<button class="sb" aria-label="Предыдущий лист"><svg width="8" height="8"><path d="M6 0v8L2 4z"/></svg></button>
<button class="sb" aria-label="Следующий лист"><svg width="8" height="8"><path d="M2 0v8l4-4z"/></svg></button>
<button class="sb" aria-label="Последний лист"><svg width="8" height="8"><path d="M7 0h1v8H7zM1 0v8l4-4z"/></svg></button>
</div>
<div class="sheets d-flex ms-1" role="tablist">
<button class="sheet current" role="tab" aria-selected="true"><svg viewBox="0 0 56 15" preserveAspectRatio="none"><path d="M0 0h56l-4.500 14.500h-47z"/></svg>Модель</button>
<button class="sheet" role="tab"><svg viewBox="0 0 47 15" preserveAspectRatio="none"><path d="M0 0h47l-4.500 14.500h-38z" stroke="none"/><path d="m47 0-4.500 14.500h-38L1 0"/></svg>Лист1</button>
<button class="sheet" role="tab"><svg viewBox="0 0 47 15" preserveAspectRatio="none"><path d="M0 0h47l-4.500 14.500h-38z" stroke="none"/><path d="m47 0-4.500 14.500h-38L1 0"/></svg>Лист2</button>
</div>
<span class="sb split ms-auto"></span>
<div class="hscroll track d-flex">
<button class="sb" aria-label="Влево"><svg width="4" height="8"><path d="M4 0v8L0 4z"/></svg></button>
<span class="sb thumb"></span>
<button class="sb" aria-label="Вправо"><svg width="4" height="8"><path d="M0 0v8l4-4z"/></svg></button>
</div>
<span class="vscroll"></span>
</div>
</section>

<aside class="dockright flex-shrink-0">
<div class="vbar d-flex flex-column align-items-center" role="toolbar" aria-label="Редактирование">
<span class="vgrip"></span>
<button class="tool" aria-label="Стереть"><svg width="16" height="16"><path d="M0 14.500h16" stroke="#222"/><path d="m3 11 9-10 4 3-8 8-3 1z" fill="#f2cf63" stroke="#6b5632" stroke-width=".8"/><path d="m1 12 3-3 4 3-2 2H3z" fill="#f4e0dc" stroke="#b43c3c"/><path d="m7 6 4 3" stroke="#3370a8" stroke-width="2"/></svg></button>
<button class="tool" aria-label="Копировать объект"><svg width="16" height="16"><circle cx="3.500" cy="3.500" r="2.500" fill="#fff"/><circle cx="6" cy="6.500" r="2.500" fill="#fff"/><circle cx="9.500" cy="10" r="2.500" fill="#dce9f6"/><circle cx="12.500" cy="12.500" r="2.500" fill="#dce9f6"/><path d="M7 2c5-1 6 1 6 4" stroke="#1b568e" stroke-width="2"/><path d="M10 5h6l-3 3z" fill="#1b568e" stroke="none"/></svg></button>
<button class="tool" aria-label="Зеркало"><svg width="16" height="16"><path d="M5.500 3v10.500H1zM9.500 3v10.500H15z" fill="url(#sheen)"/><path d="M7.500 0v16" stroke="#1e74c8"/></svg></button>
<button class="tool" aria-label="Подобие"><svg width="16" height="16"><path d="M16 14H3c-4-1-3-6 1-6 0-9 9-9 9-1h3" fill="#fff" stroke="#223"/><path d="M16 11.500H4M7 11V7c0-4 3-4 3 0v3h6" stroke="#1e74c8"/></svg></button>
<button class="tool" aria-label="Массив"><svg width="16" height="16"><path d="M.5.5h5v5h-5zM9.500.5h5v5h-5zM.5 9.500h5v5h-5zM9.500 9.500h5v5h-5z" fill="#e8f0fa" stroke="#111"/></svg></button>
<button class="tool" aria-label="Переместить"><svg width="16" height="16"><path d="M8 2v12M2 8h12" stroke="#386a9e" stroke-width="2"/><path d="m8 0 3 4H5zM8 16l3-4H5zM0 8l4-3v6zM16 8l-4-3v6z" fill="#386a9e" stroke="none"/></svg></button>
<button class="tool" aria-label="Повернуть"><svg width="16" height="16"><path d="M5 3c-7 5-3 12 4 12 7-2 8-10 1-12" stroke="#386a9e" stroke-width="2"/><path d="M1 1h7v6z" fill="#386a9e" stroke="none"/></svg></button>
<button class="tool" aria-label="Масштаб объекта"><svg width="16" height="16"><path d="M.5.5h15v15H.5z" fill="url(#sheen)" stroke="#3a83c6"/><path d="M.5 7.500h8v8h-8z" stroke-dasharray="1 1" fill="#fff"/></svg></button>
<button class="tool" aria-label="Растянуть"><svg width="16" height="16"><path d="M5.500.5h3l7 15h-10z" fill="#aac7e4" stroke="#285e91"/><path d="M5 .5H.5v15H5" fill="#fff"/><path d="M5.500 1v14" stroke-dasharray="1 1"/></svg></button>
<button class="tool" aria-label="Обрезать"><svg width="16" height="16"><path d="M0 8.500h5"/><path d="M8 8.500h8" stroke="#2a6db4" stroke-dasharray="3 1"/><path d="m4 14 5-12" stroke="#1e74c8" stroke-width="1.300"/></svg></button>
<button class="tool" aria-label="Удлинить"><svg width="16" height="16"><path d="M0 9.500h5"/><path d="M6 9.500h6" stroke="#2a6db4" stroke-dasharray="3 1"/><path d="m10 15 5-12" stroke="#1e74c8" stroke-width="1.300"/></svg></button>
<button class="tool" aria-label="Разорвать в точке"><svg width="16" height="16"><path d="M.5 3.500h15v10H.5z" fill="url(#sheen)"/><path d="M9 2h3v3H9z" fill="#386a9e" stroke="none"/></svg></button>
<button class="tool" aria-label="Разорвать"><svg width="16" height="16"><path d="M.5 3.500h15v10H.5z" fill="url(#sheen)"/><path d="M5 3.500h6" stroke="#d4d0c8"/><path d="M2 2h3v3H2zM11 2h3v3h-3z" fill="#386a9e" stroke="none"/></svg></button>
<button class="tool" aria-label="Фаска"><svg width="16" height="16"><path d="M.5 8v8M9 .5h7"/><path d="M.5 7V.5H8" stroke-dasharray="1 1"/><path d="m1 9 8-8" stroke="#1e74c8" stroke-width="1.300"/></svg></button>
<button class="tool" aria-label="Сопряжение"><svg width="16" height="16"><path d="M.5 10v6M10 .5h6"/><path d="M.5 7V.5H8" stroke-dasharray="1 1"/><path d="M1 11C1 5 5 1 11 1" stroke="#1e74c8" stroke-width="1.500"/></svg></button>
<button class="tool" aria-label="Расчленить"><svg width="16" height="16"><path d="m10 6 5-6m-5 1 6 4M9 2l2 4 5-3" stroke="#86a6c2" stroke-dasharray="2 1"/><path d="m1 5 3 1 3-1 3 2v3l-2 2 1 3-4-1-4 1 1-4-2-3z" fill="#f5c724" stroke="#f0e0a0" stroke-dasharray="2 1"/><path d="M1 5h3v2H1zM6 5h3v3H6zM1 9h3v3H1zM6 11h3v2H6zM1 13h2v2H1z" fill="#d4281b" stroke="none"/><path d="M5 9h3v1H5zM4 13h2v1H4z" fill="#400" stroke="none"/></svg></button>
</div>
<div class="vbar d-flex flex-column align-items-center mt-1" role="toolbar" aria-label="Порядок прорисовки">
<span class="vgrip"></span>
<button class="tool" aria-label="На передний план"><svg width="16" height="16"><path d="M.5.5h8v7h-8zM7.500 8.500h8v7h-8z" fill="url(#sheen)" stroke="#5b86b2"/><path d="M3.500 2.500h9v9h-9z" fill="url(#deep)" stroke="#28588c"/></svg></button>
<button class="tool" aria-label="На задний план"><svg width="16" height="16"><path d="M4.500 3.500h8v8h-8z" fill="url(#deep)" stroke="#28588c"/><path d="M.5.5h8v6h-8zM7.500 8.500h8v7h-8z" fill="url(#sheen)" stroke="#5b86b2"/></svg></button>
<button class="tool" aria-label="Перед объектом"><svg width="16" height="16"><path d="M5.500 5.500h10v9h-10z" fill="url(#sheen)" stroke="#5b86b2"/><path d="M1.500 1.500h11v9h-11z" fill="url(#deep)" stroke="#28588c"/></svg></button>
<button class="tool" aria-label="За объектом"><svg width="16" height="16"><path d="M1.500 1.500h11v9h-11z" fill="url(#deep)" stroke="#28588c"/><path d="M5.500 5.500h10v9h-10z" fill="url(#sheen)" stroke="#5b86b2"/></svg></button>
</div>
</aside>
</main>

<section class="cmd" aria-label="Командная строка">
<div class="rule"></div>
<div class="d-flex">
<span class="cmdgrip"></span>
<div class="cmdbox flex-grow-1">
<div class="d-flex bg-white"><div class="log flex-grow-1">Команда: _arc Начальная точка дуги или [Центр]:
Вторая точка дуги или [Центр/Конец]: _c Центр дуги:</div>
<div class="d-flex flex-column"><button class="sb" aria-label="История вверх"><svg width="6" height="3"><path d="M3 0l3 3H0z"/></svg></button><button class="sb" aria-label="История вниз"><svg width="6" height="3"><path d="M0 0h6L3 3z"/></svg></button></div></div>
<div class="cmdline d-flex"><input class="flex-grow-1" aria-label="Команда" value="Конечная точка дуги или [Угол/Длина хорды]: _a Центральный угол:">
<div class="cmdscroll d-flex"><button class="sb" aria-label="Строка влево"><svg width="3" height="6"><path d="M3 0v6L0 3z"/></svg></button><span class="sb"></span><span class="track flex-grow-1"></span><button class="sb" aria-label="Строка вправо"><svg width="3" height="6"><path d="M0 0v6l3-3z"/></svg></button></div></div>
</div>
</div>
</section>

<footer class="status d-flex gap-1">
<div class="coords">7.8213, 6.1240, 0.0000</div>
<button class="mode">ШАГ</button><button class="mode on">СЕТКА</button><button class="mode">ОРТО</button><button class="mode">ОТС-ПОЛЯР</button><button class="mode on">ПРИВЯЗКА</button><button class="mode">ОТС-ОБЪЕКТ</button><button class="mode">ВЕС</button><button class="mode on">МОДЕЛЬ</button>
<div class="tray ms-auto d-flex justify-content-center"><svg width="18" height="16"><path d="M5 1c-3 3 0 7 5 6l1-6M8 6l-5 8h6z" fill="#a9c4e8" stroke="#3c5f94"/><path d="m12 6 5.500 9.500h-11z" fill="#ffe51e" stroke="#b38600"/><path d="M12 9v4M12 14v1" stroke-width="1.500"/></svg></div>
<button aria-label="Меню строки состояния"><svg class="blackico" width="8" height="4"><path d="M0 0h7L3.500 4z"/></svg></button>
</footer>
<script src="https://cdn.jsdelivr.net/npm/bootstrap@5.3.0/dist/js/bootstrap.bundle.min.js"></script>
</body>
</html>
